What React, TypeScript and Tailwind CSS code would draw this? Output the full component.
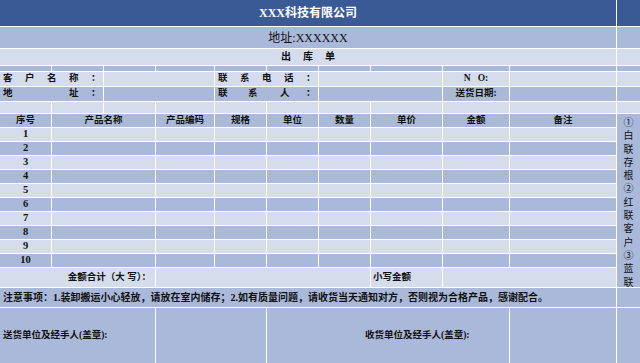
const light = 'bg-[#d5dcec]'
const mid = 'bg-[#aab9da]'

function Spread({ chars }: { chars: string[] }) {
  return (
    <div className="flex h-full items-center justify-between px-[3px]">
      {chars.map((c, i) => (
        <span key={i} className="w-[9px] text-center">
          {c}
        </span>
      ))}
    </div>
  )
}

export default function App() {
  const side = ['①', '白', '联', '存', '根', '②', '红', '联', '客', '户', '③', '蓝', '联']
  const rows = [1, 2, 3, 4, 5, 6, 7, 8, 9, 10]

  return (
    <div className="w-[640px] h-[363px] overflow-hidden bg-white font-['Liberation_Serif','Noto_Sans_CJK_SC',serif] text-[9.5px] font-bold leading-none text-[#111]">
      <div className="grid grid-cols-[51px_51px_51px_58px_51px_51px_51px_71px_66px_106px_23px] grid-rows-[26px_21px_16px_5px_14px_14px_11px_13px_repeat(10,13px)_19px_19px_55px] gap-px">
        {/* title */}
        <div className="col-span-10 flex items-center justify-center bg-[#3a5a96] text-[12px] text-white">
          XXX科技有限公司
        </div>
        <div className="bg-[#3a5a96]" />

        {/* address */}
        <div className={`col-span-10 flex items-center justify-center ${mid} text-[12px] font-normal`}>
          地址:XXXXXX
        </div>
        <div className={mid} />

        {/* doc name */}
        <div className={`col-span-10 flex items-center justify-center ${light} pl-[12px] text-[10px] tracking-[12px]`}>
          出库单
        </div>
        <div className={light} />

        {/* spacer row */}
        {Array.from({ length: 11 }).map((_, i) => (
          <div key={'t' + i} className={mid} />
        ))}

        {/* customer */}
        <div className={`col-span-2 ${light}`}>
          <Spread chars={['客', '户', '名', '称', '：']} />
        </div>
        <div className={`col-span-2 ${light}`} />
        <div className={`col-span-2 ${light}`}>
          <Spread chars={['联', '系', '电', '话', '：']} />
        </div>
        <div className={`col-span-2 ${light}`} />
        <div className={`flex items-center justify-center ${light}`}>N&nbsp;&nbsp;&nbsp;O:</div>
        <div className={light} />
        <div className={light} />

        {/* address line */}
        <div className={`col-span-2 ${mid}`}>
          <Spread chars={['地', '', '', '址', '：']} />
        </div>
        <div className={`col-span-2 ${mid}`} />
        <div className={`col-span-2 ${mid} flex h-full items-center px-[3px]`}>
          <span className="w-[9px]">联</span>
          <span className="ml-[21px] w-[9px]">系</span>
          <span className="ml-[23px] w-[9px]">人</span>
          <span className="ml-auto w-[9px] text-center">：</span>
        </div>
        <div className={`col-span-2 ${mid}`} />
        <div className={`flex items-center justify-center ${mid}`}>送货日期:</div>
        <div className={mid} />
        <div className={mid} />

        {/* empty row */}
        {Array.from({ length: 11 }).map((_, i) => (
          <div key={'e' + i} className={light} />
        ))}

        {/* header */}
        <div className={`flex items-center justify-center ${mid}`}>序号</div>
        <div className={`col-span-2 flex items-center justify-center ${mid}`}>产品名称</div>
        <div className={`flex items-center justify-center ${mid}`}>产品编码</div>
        <div className={`flex items-center justify-center ${mid}`}>规格</div>
        <div className={`flex items-center justify-center ${mid}`}>单位</div>
        <div className={`flex items-center justify-center ${mid}`}>数量</div>
        <div className={`flex items-center justify-center ${mid}`}>单价</div>
        <div className={`flex items-center justify-center ${mid}`}>金额</div>
        <div className={`flex items-center justify-center ${mid}`}>备注</div>
        <div className={`row-span-12 flex flex-col items-center pt-[2px] ${mid} text-[10px] font-normal leading-[13.3px]`}>
          {side.map((c, i) => (
            <span key={i}>{c}</span>
          ))}
        </div>

        {/* data rows */}
        {rows.map((n) => {
          const bg = n % 2 === 1 ? light : mid
          return [
            <div key={n + 'a'} className={`flex items-center justify-center text-[10.5px] ${bg}`}>
              {n}
            </div>,
            <div key={n + 'b'} className={`col-span-2 ${bg}`} />,
            <div key={n + 'c'} className={bg} />,
            <div key={n + 'd'} className={bg} />,
            <div key={n + 'e'} className={bg} />,
            <div key={n + 'f'} className={bg} />,
            <div key={n + 'g'} className={bg} />,
            <div key={n + 'h'} className={bg} />,
            <div key={n + 'i'} className={bg} />,
          ]
        })}

        {/* totals */}
        <div className={`col-span-3 flex items-center justify-end pr-[4px] ${light}`}>金额合计（大 写）：</div>
        <div className={`col-span-4 ${light}`} />
        <div className={`flex items-center pl-[2px] ${light}`}>小写金额</div>
        <div className={`col-span-2 ${light}`} />

        {/* notes */}
        <div className={`col-span-10 flex items-center pl-[3px] text-[10px] ${mid}`}>
          注意事项：1.装卸搬运小心轻放，请放在室内储存；2.如有质量问题，请收货当天通知对方，否则视为合格产品，感谢配合。
        </div>
        <div className={mid} />

        {/* signatures */}
        <div className={`col-span-3 flex items-center pl-[3px] ${mid}`}>送货单位及经手人(盖章):</div>
        <div className={`col-span-2 ${mid}`} />
        <div className={`col-span-4 flex items-center pl-[98px] ${mid}`}>收货单位及经手人(盖章):</div>
        <div className={mid} />
        <div className={mid} />
      </div>
    </div>
  )
}
